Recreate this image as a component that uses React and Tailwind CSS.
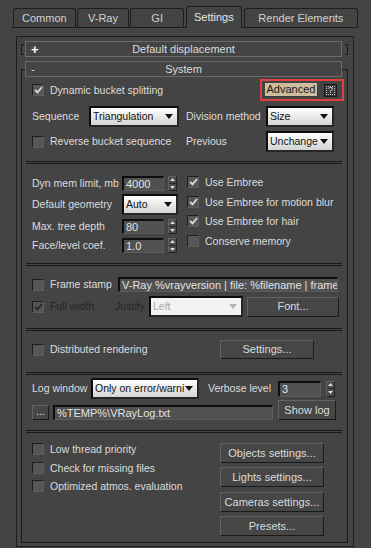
import React from "react";

function Check({ on, dim }) {
  return (
    <span className="w-[12px] h-[12px] shrink-0 flex items-center justify-center border border-t-[#1e1e1e] border-l-[#1e1e1e] border-r-[#5e5e5e] border-b-[#5e5e5e] bg-[#565656]">
      {on && (
        <svg width="9" height="8" viewBox="0 0 9 8">
          <path d="M1 3.8 L3.5 6.3 L8 1" fill="none" stroke={dim ? "#262626" : "#dadada"} strokeWidth="1.8" />
        </svg>
      )}
    </span>
  );
}

function CheckRow({ on, dim, label, className = "" }) {
  return (
    <div className={`h-[12px] flex items-center gap-[6px] overflow-hidden whitespace-nowrap ${className}`}>
      <Check on={on} dim={dim} />
      <span className={dim ? "text-[#262626]" : ""}>{label}</span>
    </div>
  );
}

function Drop({ w, value, disabled }) {
  return (
    <div
      className={`${w} h-[21px] shrink-0 flex items-center border-2 border-[#0c0c0c] border-r-[#262626] border-b-[#262626] pl-[2px] pr-[4px] ${
        disabled ? "bg-[#f3f3f3]" : "bg-linear-to-b from-[#ffffff] to-[#d4d4d4]"
      }`}
    >
      <span className={`flex-1 overflow-hidden whitespace-nowrap text-[10.5px] ${disabled ? "text-[#a9a9a9]" : "text-[#111111]"}`}>
        {value}
      </span>
      <svg width="8" height="5" viewBox="0 0 8 5" className="shrink-0 ml-[1px]">
        <path d="M0 0 H8 L4 5 Z" fill={disabled ? "#b4b4b4" : "#111111"} />
      </svg>
    </div>
  );
}

function Field({ w, h, value }) {
  return (
    <div
      className={`${w} ${h} shrink-0 flex items-center overflow-hidden whitespace-nowrap pl-[2px] border border-t-2 border-l-2 border-t-[#0e0e0e] border-l-[#0e0e0e] border-r-[#5c5c5c] border-b-[#5c5c5c] bg-[#515151] text-[#e2e2e2] text-[11px]`}
    >
      {value}
    </div>
  );
}

function Spin({ className = "" }) {
  return (
    <div className={`w-[9px] h-[15px] shrink-0 flex flex-col items-center justify-center gap-[2px] border border-t-[#616161] border-l-[#616161] border-r-[#222222] border-b-[#222222] bg-[#4a4a4a] ${className}`}>
      <svg width="5" height="3" viewBox="0 0 5 3">
        <path d="M0 3 H5 L2.5 0 Z" fill="#d8d8d8" />
      </svg>
      <div className="w-[7px] h-px bg-[#2a2a2a]" />
      <svg width="5" height="3" viewBox="0 0 5 3">
        <path d="M0 0 H5 L2.5 3 Z" fill="#d8d8d8" />
      </svg>
    </div>
  );
}

function Btn({ className = "", children }) {
  return (
    <div
      className={`shrink-0 flex items-center justify-center whitespace-nowrap border border-t-[#626262] border-l-[#626262] border-r-[#1a1a1a] border-b-[#1a1a1a] bg-[#464646] text-[11px] ${className}`}
    >
      {children}
    </div>
  );
}

function Sep() {
  return <div className="ml-[4px] w-[316px] h-[3px] border-y border-[#171717]" />;
}

function Header({ sign, title, bold }) {
  return (
    <div className="w-[317px] h-[16px] grid grid-cols-[20px_1fr_20px] items-center border border-[#6a6a6a] bg-[#444444] text-[11px]">
      <span className={`pl-[5px] ${bold ? "font-bold text-white text-[13px]" : "text-[#dddddd]"}`}>{sign}</span>
      <span className="text-center">{title}</span>
      <span />
    </div>
  );
}

const tabs = [
  { name: "Common", w: "w-[63px]" },
  { name: "V-Ray", w: "w-[53px]" },
  { name: "GI", w: "w-[54px]" },
  { name: "Settings", w: "w-[56px]", active: true },
  { name: "Render Elements", w: "w-[115px]" },
];

export default function App() {
  return (
    <div className="w-[371px] h-[548px] bg-[#444444] overflow-hidden text-[10.5px] leading-none text-[#dcdcdc] [font-family:'Liberation_Sans',Arial,sans-serif]">
      {/* Tabs */}
      <div className="ml-[12px] w-[346px] h-[28px] flex items-end gap-[1px] pl-[1px] border-b border-[#1c1c1c]">
        {tabs.map((t) => (
          <div
            key={t.name}
            className={`${t.w} flex items-center justify-center rounded-t-[3px] border border-b-0 border-[#1e1e1e] text-[11px] ${
              t.active
                ? "h-[22px] -mb-px ml-[1px] relative z-10 bg-[#444444] text-[#e4e4e4]"
                : "h-[19px] bg-[#434343] text-[#d2d2d2]"
            } ${t.name === "Render Elements" ? "ml-[1px]" : ""}`}
          >
            {t.name}
          </div>
        ))}
      </div>

      {/* Panel */}
      <div className="ml-[16px] mt-[8px] w-[338px] h-[511px] border border-[#1e1e1e] pt-[4px]">
        <div className="ml-[4px] h-[16px] flex items-center">
          <div className="w-[3px] h-[11px] border-l border-y border-[#1a1a1a]" />
          <div className="ml-[1px]">
            <Header sign="+" title="Default displacement" bold />
          </div>
          <div className="ml-[3px] w-[3px] h-[11px] border-r border-y border-[#1a1a1a]" />
        </div>

        <div className="mt-[4px] ml-[8px] relative z-10 w-[317px]">
          <Header sign="-" title="System" />
        </div>

        <div className="-mt-[8px] ml-[4px] w-[327px] h-[474px] border border-[#1a1a1a]">
          {/* System */}
          <div className="h-[91px] pt-[9px]">
            <div className="h-[22px] flex items-center pl-[10px] pr-[3px]">
              <CheckRow on label="Dynamic bucket splitting" />
              <div className="ml-auto w-[84px] h-[22px] flex items-center gap-[6px] pl-[3px] border-2 border-[#e0403f]">
                <div className="w-[53px] h-[14px] flex items-center justify-center bg-[#cdbd9c] text-[#161616] text-[11px] border-r border-b border-[#3a3a3a]">
                  Advanced
                </div>
                <div className="w-[13px] h-[13px] flex items-center justify-center bg-[#383838] border border-[#1a1a1a] p-[1px]">
                  <div className="w-full h-full flex items-center justify-center border border-dotted border-[#bbbbbb] text-[9px] text-[#dddddd]">
                    ?
                  </div>
                </div>
              </div>
            </div>
            <div className="mt-[5px] h-[21px] flex items-center pl-[10px] whitespace-nowrap">
              <span className="w-[57px]">Sequence</span>
              <Drop w="w-[90px]" value="Triangulation" />
              <span className="ml-[7px] w-[80px]">Division method</span>
              <Drop w="w-[68px]" value="Size" />
            </div>
            <div className="mt-[4px] h-[21px] flex items-center pl-[10px] whitespace-nowrap">
              <CheckRow className="w-[154px]" label="Reverse bucket sequence" />
              <span className="w-[80px]">Previous</span>
              <Drop w="w-[68px]" value="Unchange" />
            </div>
          </div>
          <Sep />

          {/* Memory / Embree */}
          <div className="h-[99px] pt-[12px] pl-[10px] flex whitespace-nowrap">
            <div className="w-[155px]">
              <div className="h-[15px] flex items-center">
                <span className="w-[90px]">Dyn mem limit, mb</span>
                <Field w="w-[42px]" h="h-[15px]" value="4000" />
                <Spin className="ml-[4px]" />
              </div>
              <div className="mt-[3px] h-[21px] flex items-center">
                <span className="w-[90px]">Default geometry</span>
                <Drop w="w-[56px]" value="Auto" />
              </div>
              <div className="mt-[4px] h-[15px] flex items-center">
                <span className="w-[90px]">Max. tree depth</span>
                <Field w="w-[42px]" h="h-[15px]" value="80" />
                <Spin className="ml-[4px]" />
              </div>
              <div className="mt-[4px] h-[15px] flex items-center">
                <span className="w-[90px]">Face/level coef.</span>
                <Field w="w-[42px]" h="h-[15px]" value="1.0" />
                <Spin className="ml-[4px]" />
              </div>
            </div>
            <div className="w-[147px] overflow-hidden">
              <CheckRow on label="Use Embree" />
              <CheckRow on className="mt-[8px]" label="Use Embree for motion blur" />
              <CheckRow on className="mt-[7px]" label="Use Embree for hair" />
              <CheckRow className="mt-[8px]" label="Conserve memory" />
            </div>
          </div>
          <Sep />

          {/* Frame stamp */}
          <div className="h-[62px] pt-[11px] pl-[10px] whitespace-nowrap">
            <div className="h-[15px] flex items-center">
              <CheckRow className="w-[86px]" label="Frame stamp" />
              <Field
                w="w-[220px]"
                h="h-[15px]"
                value="V-Ray %vrayversion | file: %filename | frame: %frame | primitives: %primitives"
              />
            </div>
            <div className="mt-[4px] h-[21px] flex items-center">
              <CheckRow on dim className="w-[83px]" label="Full width" />
              <span className="w-[34px] text-[#262626]">Justify</span>
              <Drop w="w-[94px]" value="Left" disabled />
              <Btn className="ml-[4px] w-[92px] h-[20px]">Font...</Btn>
            </div>
          </div>
          <Sep />

          {/* Distributed */}
          <div className="h-[41px] pt-[9px] pl-[10px] whitespace-nowrap">
            <div className="h-[19px] flex items-center">
              <CheckRow className="w-[188px]" label="Distributed rendering" />
              <Btn className="w-[94px] h-[19px]">Settings...</Btn>
            </div>
          </div>
          <Sep />

          {/* Log */}
          <div className="h-[55px] pt-[3px] pl-[10px] whitespace-nowrap">
            <div className="h-[21px] flex items-center">
              <span className="w-[59px]">Log window</span>
              <Drop w="w-[108px]" value="Only on error/warning" />
              <span className="ml-[9px] w-[70px]">Verbose level</span>
              <Field w="w-[43px]" h="h-[16px]" value="3" />
              <Spin className="ml-[5px] h-[16px]" />
            </div>
            <div className="mt-[1px] h-[20px] flex items-end">
              <Btn className="w-[17px] h-[15px] pb-[3px]">...</Btn>
              <div className="ml-[4px]">
                <Field w="w-[220px]" h="h-[15px]" value="%TEMP%\VRayLog.txt" />
              </div>
              <Btn className="ml-[5px] w-[58px] h-[20px]">Show log</Btn>
            </div>
          </div>
          <Sep />

          {/* Misc */}
          <div className="h-[109px] pt-[10px] pl-[10px] flex whitespace-nowrap">
            <div className="w-[188px]">
              <CheckRow label="Low thread priority" />
              <CheckRow className="mt-[7px]" label="Check for missing files" />
              <CheckRow className="mt-[6px] w-[152px]" label="Optimized atmos. evaluation" />
            </div>
            <div>
              <Btn className="w-[104px] h-[20px]">Objects settings...</Btn>
              <Btn className="mt-[4px] w-[104px] h-[20px]">Lights settings...</Btn>
              <Btn className="mt-[5px] w-[104px] h-[20px]">Cameras settings...</Btn>
              <Btn className="mt-[4px] w-[104px] h-[20px]">Presets...</Btn>
            </div>
          </div>
        </div>
      </div>
    </div>
  );
}
